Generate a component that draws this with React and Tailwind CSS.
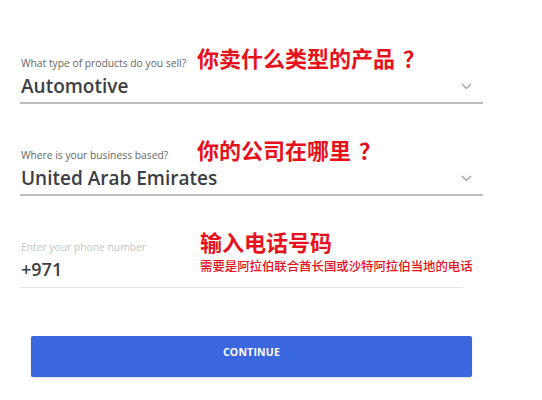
const fields = [
  {
    label: 'What type of products do you sell?',
    value: 'Automotive',
    note: '你卖什么类型的产品',
  },
  {
    label: 'Where is your business based?',
    value: 'United Arab Emirates',
    note: '你的公司在哪里',
  },
]

const sans = "font-['Open_Sans','Noto_Sans_CJK_SC',sans-serif]"
const cjk = "font-['Noto_Sans_CJK_SC',sans-serif]"

function Chevron() {
  return (
    <svg width="11" height="7" viewBox="0 0 11 7" className="mr-[11px]">
      <polyline points="1,1 5.5,5.5 10,1" fill="none" stroke="#999" strokeWidth="1.1" />
    </svg>
  )
}

export default function App() {
  return (
    <div className={`w-[542px] h-[400px] bg-white ${sans}`}>
      <div className="pl-[20px] pt-[44px]">
        {/* Select fields */}
        {fields.map((f, i) => (
          <div key={f.value} className={`w-[463px] ${i > 0 ? 'mt-[32px]' : ''}`}>
            <div className="flex items-baseline h-[26px]">
              <span className="w-[177px] shrink-0 pl-[1px] text-[10.3px] text-[#666]">{f.label}</span>
              <span className={`${cjk} text-[22px] leading-[26px] font-bold text-[#e6111a]`}>
                {f.note}
                <span className="ml-[8px]">？</span>
              </span>
            </div>
            <div className="flex items-center justify-between pt-[3px] pb-[3px] border-b-2 border-[#bcbcbc]">
              <span className="pl-[1px] text-[19px] leading-[26px] font-semibold text-[#3b3e45]">{f.value}</span>
              <Chevron />
            </div>
          </div>
        ))}

        {/* Phone */}
        <div className="w-[443px] mt-[32px]">
          <div className="flex items-baseline h-[26px]">
            <span className="w-[180px] shrink-0 pl-[1px] text-[10.3px] text-[#c4c4c4]">Enter your phone number</span>
            <span className={`${cjk} text-[22px] leading-[26px] font-bold text-[#e6111a]`}>输入电话号码</span>
          </div>
          <div className="flex items-start h-[34px] pt-[2px] border-b border-[#e6e6e6]">
            <span className="w-[180px] shrink-0 pl-[1px] text-[18px] leading-[26px] font-semibold text-[#3b3e45]">+971</span>
            <span className={`${cjk} pt-[3px] whitespace-nowrap text-[12.4px] leading-[14px] font-medium text-[#e6111a]`}>
              需要是阿拉伯联合酋长国或沙特阿拉伯当地的电话
            </span>
          </div>
        </div>

        {/* Continue */}
        <button className="mt-[48px] ml-[11px] w-[441px] h-[41px] pb-[8px] bg-[#3a67de] rounded-[2px] text-white text-[10.5px] font-bold tracking-[0.2px] shadow-[0_1px_2px_rgba(0,0,0,0.15)]">
          CONTINUE
        </button>
      </div>
    </div>
  )
}
